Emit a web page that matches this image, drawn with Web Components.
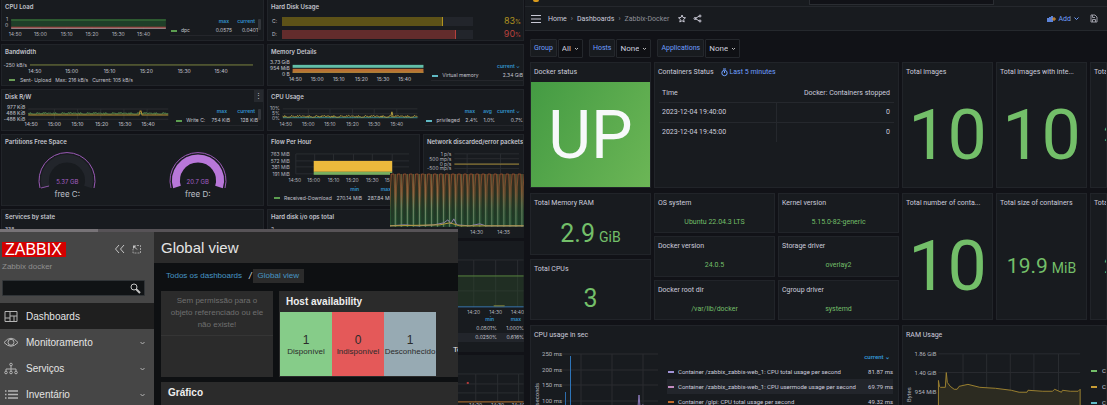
<!DOCTYPE html>
<html lang="en">
<head>
<meta charset="utf-8">
<title>Monitoring dashboards</title>
<style>
html,body{margin:0;height:100%;background:#111217}
body{overflow:hidden;font-family:Inter,sans-serif;color:#c3c4cd}
</style>
</head>
<body>
<monitor-wall></monitor-wall>
<script>
const BASE = `<style>*{box-sizing:border-box}h1,h2,p,ul{margin:0;padding:0;font-weight:inherit;font-size:inherit}button,input{font:inherit;color:inherit;background:none;border:0;padding:0;margin:0}a{color:inherit;text-decoration:none}svg{display:block}</style>`;
function define(name, html, setup) {
  customElements.define(name, class extends HTMLElement {
    constructor() { super(); this.attachShadow({mode: 'open'}); }
    connectedCallback() {
      if (this.shadowRoot.childNodes.length) return;
      this.shadowRoot.innerHTML = BASE + (typeof html === 'function' ? html(this) : html);
      if (setup) setup(this.shadowRoot, this);
    }
  });
}

/* ---------- charts ---------- */
const times = ['14:50','15:00','15:10','15:20','15:30','15:40'];
const spread = (from, step, labels = times) => labels.map((t, i) => [Math.round(from + step * i), t]);
const line = (pts, c, w = 1, fill = 'none') => `<polyline points="${pts}" fill="${fill}" stroke="${c}" stroke-width="${w}"/>`;
const rect = (x, y, w, h, c) => `<rect x="${x}" y="${y}" width="${w}" height="${h}" fill="${c}"/>`;
function noise(x0, x1, y, amp, step = 1) {
  let s = '', r = 7;
  for (let x = x0; x <= x1; x += step) { r = (r * 37 + 11) % 101; s += `${x},${(y - amp * r / 101).toFixed(1)} `; }
  return s;
}
function spikes() {
  let s = `<defs><linearGradient id="g" x1="0" y1="0" x2="0" y2="1"><stop offset="0" stop-color="#35291f"/><stop offset=".45" stop-color="#263322"/><stop offset="1" stop-color="#1d3d28"/></linearGradient><linearGradient id="o" x1="0" y1="0" x2="0" y2="1"><stop offset="0" stop-color="#a8562e"/><stop offset=".4" stop-color="#8a5a32"/><stop offset=".7" stop-color="#2f5a38"/></linearGradient><linearGradient id="p" x1="0" y1="0" x2="0" y2="1"><stop offset="0" stop-color="#55603c"/><stop offset=".3" stop-color="#94623c"/><stop offset=".6" stop-color="#6f8562"/><stop offset="1" stop-color="#5d8060"/></linearGradient></defs>` + rect(0, 1, 134, 53, 'url(#g)');
  for (let i = 0; i < 23; i++) {
    const x = i * 6.05;
    s += `<path d="M${x + .5} 54 V14 L${x + 1.4} 1 H${x + 4} L${x + 4.6} 16 V54" fill="none" stroke="url(#o)" stroke-width=".7"/>` +
         rect((x + 4.8).toFixed(1), 1, 1.1, 53, 'url(#p)');
  }
  return s + line('0,53 14,52 28,53 44,52 54,50 58,47 61,51 64,46 67,52 80,53 90,51 96,53 134,53', '#8d80a8') + line('0,53 50,52 60,50 70,53 134,53', '#b59a3c');
}
const CHARTS = {
  cpuload: {w:166,h:29,box:[9,8,153,10],grid:[38,64,89,115,140],rows:[12],xt:spread(13,25.4),xy:25,yt:[[10,'1'],[16,'0']],yr:6,
    draw:rect(9,8,153,8,'#1f3f29')+line('9,9 162,9','#3f7d3c')+line('9,16 162,16','#b23a3a')+line('9,17 162,17','#b9a0a0')},
  bandwidth: {w:262,h:18,box:[28,7,224,4],grid:[],rows:[],xt:spread(33,37.4),xy:17,yt:[[11,'-250 kB/s']],yr:25,bold:1,
    draw:line('28,9 252,9','#7d8640')},
  disk: {w:172,h:29,box:[26,8,139,10],grid:[52,75,98,121,144],rows:[8,13,18],xt:spread(29,23.2),xy:25,yt:[[8,'977 KiB'],[14,'488 KiB'],[20,'-488 KiB']],yr:23,bold:1,
    draw:line(noise(26,165,13,1.6),'#4e7a45')+line('26,14 136,14 137,10 138,10 139,14 165,14','#b89335')},
  memory: {w:166,h:30,box:[25,8,133,10],grid:[],rows:[],xt:spread(28,22.2),xy:25,yt:[[8,'3.73 GiB'],[14,'954 MiB'],[20,'0 B']],yr:22,bold:1,
    draw:rect(25,9,133,3,'#62bfa8')+rect(25,13,133,4,'#b97034')+rect(25,16,133,1,'#b58d3a')},
  cpuusage: {w:160,h:30,box:[15,8,137,10],grid:[41,63,86,108,131],rows:[8,13],xt:spread(18,22.6),xy:25,yt:[[9,'10%'],[14,'5%'],[19,'0%']],yr:12,
    draw:line('15,17 152,17','#3c8c8c')+line(noise(15,152,16.6,2.2),'#a8963d')+line('125,15 126,11 127,15','#b5a03f')},
  flow: {w:152,h:38,box:[28,8,114,20],grid:[28,47,66,86,105,125],rows:[8,15,21,28],xt:spread(27,19.4),xy:36,yt:[[10,'763 MiB'],[17,'572 MiB'],[23,'381 MiB'],[30,'191 MiB']],yr:22,
    draw:rect(46,15,79,11,'#ecb93c')+rect(46,26,79,3,'#77ae5e')},
  network: {w:101,h:38,box:[31,8,66,20],grid:[44,78],rows:[8,13,18,23],xt:[],xy:36,yt:[[10,'1 p/s'],[15,'500 mp/s'],[20,'0 p/s'],[25,'-500 mp/s']],yr:28,
    draw:line('31,18.5 97,18.5','#a58d38')},
  stripes: {w:134,h:64,box:[0,0,134,54],grid:[],rows:[],xt:[[87,'14:30'],[114,'14:35']],xy:61,yt:[],yr:0,draw:spikes()},
  idle: {w:134,h:58,box:[60,3,74,47],grid:[84,106,128],rows:[3,34],xt:[[84,'14:20'],[106,'14:30'],[128,'14:40']],xy:57,yt:[],yr:0,
    draw:`<rect x="60" y="19" width="74" height="31" fill="#2c4a2a" opacity=".4"/>`+line('60,19 134,19','#58853f')+line('60,50 134,50','#3874b0')+line('104,49 115,49','#8a8a3c')},
  swap: {w:134,h:40,box:[60,4,74,28],grid:[86,108,129],rows:[4,14,23],xt:[[86,'14:20'],[108,'14:30'],[129,'14:40']],xy:37,yt:[],yr:0,
    draw:line('60,32 134,32','#b9742f')+rect(77,12,2,2,'#b23a3a')},
  cpusec: {w:136,h:80,box:[31,9,96,70],grid:[50,81,112],rows:[9,25,40,56,71],xt:[],xy:0,yt:[[11,'250 ms'],[27,'200 ms'],[42,'150 ms'],[58,'100 ms']],yr:31,fs:6,side:['seconds',8,38],
    draw:rect(34,47,1,33,'#2d6cab')+rect(39,11,1,69,'#2d74b8')+line('104,80 107,62 108,50 109,62 111,60 116,61 128,62','#8a78b8')},
  ram: {w:184,h:80,box:[36,9,144,70],grid:[61,85,109,133,158],rows:[9,28,48],xt:[],xy:0,yt:[[11,'1.86 GiB'],[30,'1.40 GiB'],[50,'954 MiB']],yr:34,fs:6,side:['Bytes',8,43],
    draw:`<path d="M36 80V36L37 42 38 43H43L44 28 45 38 48 42 52 45H55L57 42 66 40 78 43 94 44 110 46 118 48H126L127 46 142 47H152L154 45 161 48 162 46 170 47 178 47 180 45V80Z" fill="#2c2b21" stroke="#9b8130" stroke-width="1"/>`}
};
define('time-chart', el => {
  const c = CHARTS[el.getAttribute('data')], [x, y, w, h] = c.box, g = 'stroke="#2a2d31" stroke-width="1"';
  return `<style>:host{display:block;min-width:0}svg{width:100%;overflow:visible}text{font-family:var(--chart-font,Inter);font-size:${c.fs || 5}px;fill:#b4b5be;font-weight:${c.bold ? 500 : 400}}</style>
  <svg viewBox="0 0 ${c.w} ${c.h}" role="img" aria-label="Time series">
  ${c.rows.map(v => `<path d="M${x} ${v}H${x + w}" ${g}/>`).join('')}${c.grid.map(v => `<path d="M${v} ${y}V${y + h}" ${g}/>`).join('')}
  ${c.draw}
  ${c.xt.map(([v, t]) => `<text x="${v}" y="${c.xy}" text-anchor="middle">${t}</text>`).join('')}
  ${c.yt.map(([v, t]) => `<text x="${c.yr}" y="${v}" text-anchor="end">${t}</text>`).join('')}
  ${c.side ? `<text transform="translate(${c.side[1]} ${c.side[2]}) rotate(-90)" text-anchor="end">${c.side[0]}</text>` : ''}
  </svg>`;
});

/* rows: "colour|name|value|value; ..."   cols: "label:width, ..." */
define('series-legend', el => {
  const cols = (el.getAttribute('cols')).split(',').map(s => s.split(':'));
  const rows = el.getAttribute('rows').split(';').map(s => s.split('|'));
  return `<style>:host{display:block;font-size:var(--fs,5px);line-height:var(--row,9px);min-width:0}
  table{width:100%;border-collapse:collapse;table-layout:fixed}th,td{padding:0;font-weight:400;text-align:right;white-space:nowrap}
  thead th{color:#3394cf;font-weight:600;padding-right:3px}tbody th{text-align:left}
  tbody tr:nth-child(2){background:#22252b}i{display:inline-block;width:6px;height:2px;margin:0 4px 0 1px;vertical-align:middle}
  :host([underline]) tbody tr{border-bottom:1px solid #24262b}</style>
  <table><colgroup><col>${cols.map(c => `<col style="width:${c[1]}px">`).join('')}</colgroup>
  <thead><tr><td></td>${cols.map(c => `<th scope="col">${c[0]}</th>`).join('')}</tr></thead>
  <tbody>${rows.map(([c, n, ...v]) => `<tr><th scope="row"><i style="background:${c}"></i>${n}</th>${v.map(t => `<td>${t}</td>`).join('')}</tr>`).join('')}</tbody></table>`;
});

define('dash-panel', el => `<style>
  :host{display:flex;flex-direction:column;min-width:0;min-height:0;background:#181b1f;border:1px solid #212429;overflow:hidden;position:relative}
  h2{flex:none;display:flex;font-size:var(--title-size,6px);font-weight:var(--title-weight,600);line-height:var(--title-line,9px);padding:var(--title-pad,2px 3px 0);white-space:nowrap;overflow:hidden}
  .body{flex:1;min-height:0;min-width:0;display:flex;flex-direction:column}</style>
  <h2>${el.getAttribute('heading')}<slot name="extra"></slot></h2><div class="body"><slot></slot></div>`);

define('usage-bar', el => `<style>:host{display:grid;grid-template-columns:10px 192fr 48fr;align-items:center;height:9px;font-size:5px;padding:0 2px 0 4px}
  .track{height:9px;background:#22252b}.fill{height:100%;width:${el.getAttribute('fill')}%;background:${el.getAttribute('tone')};border-right:1px solid ${el.getAttribute('edge')}}
  b{font-size:9px;font-weight:400;line-height:9px;text-align:right;color:${el.getAttribute('edge')}}small{font-size:6px}</style>
  <span>${el.getAttribute('label')}</span><div class="track" role="meter" aria-label="Disk ${el.getAttribute('label')}" aria-valuenow="${el.getAttribute('value')}"><div class="fill"></div></div><b>${el.getAttribute('value')}<small>%</small></b>`);

define('arc-gauge', el => {
  const full = el.hasAttribute('full');
  return `<style>:host{display:flex;flex-direction:column;align-items:center;width:64px;line-height:8px}svg{width:64px;height:44px;margin-bottom:-13px}
  b{font-weight:400;font-size:6px;color:#a45fc4;line-height:9px}span{font-size:8px;line-height:16px;color:#bfc0c9}</style>
  <svg viewBox="0 0 64 44" aria-hidden="true"><g fill="none" transform="translate(32 35)"><path d="M-27 7A28 28 0 1 1 27 7" stroke="#9a5ab5" stroke-width="1"/>
  <path d="M-21 6A22 22 0 1 1 21 6" stroke="${full ? '#b877d9' : '#22252b'}" stroke-width="8"/>${full ? '' : '<path d="M-26 7L-18 5" stroke="#8b55a5" stroke-width="1"/>'}</g></svg>
  <b>${el.getAttribute('value')}</b><span>${el.getAttribute('label')}</span>`;
});

/* ---------- host dashboard ---------- */
define('host-dashboard', `<style>
  :host{display:grid;grid-template-columns:263fr 257fr;gap:3px;padding-left:1px;margin-top:-1px;grid-template-rows:42px 42px 42px 72px 60px;align-items:stretch}
  .side{display:grid;align-items:start}.a{grid-template-columns:166fr 87fr 5px}.b{grid-template-columns:172fr 82fr 5px}.c{grid-template-columns:164fr 92fr}.d{grid-template-columns:158fr 98fr}
  .split{display:grid;grid-template-columns:153fr 101fr;gap:3px;min-width:0}
  .side series-legend{margin-top:6px}.thumb{width:3px;height:11px;margin-top:8px;background:#33363b;border-radius:1px}
  .key{display:flex;gap:4px;font-size:5px;line-height:9px;padding:2px 7px 0;align-items:center}.key i{width:6px;height:2px;background:#6b9e57;margin-right:1px}
  .bars{display:grid;gap:4px;padding-top:5px}.gauges{display:flex;justify-content:space-around}
  .menu{position:absolute;right:0;top:0;width:9px;height:12px;background:#26292e;font-size:7px;line-height:10px}
  .num{font-size:5px;line-height:8px;padding:4px 3px}.flow{padding:1px 25px 0 5px}
  </style>
  <dash-panel heading="CPU Load"><div class="side a"><time-chart data="cpuload"></time-chart><series-legend underline cols="max:29,current:26" rows="#5c9e50|dpc|0.0575|0.0401"></series-legend><span class="thumb"></span></div></dash-panel>
  <dash-panel heading="Hard Disk Usage"><div class="bars"><usage-bar label="C:" value="83" fill="84" tone="#5d5218" edge="#b0921f"></usage-bar><usage-bar label="D:" value="90" fill="91" tone="#632c2c" edge="#b5403c"></usage-bar></div></dash-panel>
  <dash-panel heading="Bandwidth"><time-chart data="bandwidth"></time-chart><div class="key"><i></i><span>Sent- Upload</span><span>Max: 216 kB/s</span><span>Current: 105 kB/s</span></div></dash-panel>
  <dash-panel heading="Memory Details"><div class="side c"><time-chart data="memory"></time-chart><series-legend underline cols="current ⌄:30" rows="#5fb9c4|Virtual memory|2.34 GiB"></series-legend></div></dash-panel>
  <dash-panel heading="Disk R/W"><div class="side b"><time-chart data="disk"></time-chart><series-legend underline cols="max:24,current:28" rows="#5c9e50|Write C:|754 KiB|128 KiB"></series-legend><span class="thumb"></span></div><button class="menu" aria-label="Panel menu">⋮</button></dash-panel>
  <dash-panel heading="CPU Usage"><div class="side d"><time-chart data="cpuusage"></time-chart><series-legend underline cols="max:17,avg:17,current ⌄:28" rows="#5fb9c4|privileged|2.4%|1.0%|0.7%"></series-legend></div></dash-panel>
  <dash-panel heading="Partitions Free Space"><div class="gauges"><arc-gauge value="5.37 GB" label="free C:"></arc-gauge><arc-gauge full value="20.7 GB" label="free D:"></arc-gauge></div></dash-panel>
  <div class="split"><dash-panel heading="Flow Per Hour"><time-chart data="flow"></time-chart><series-legend class="flow" cols="min:31,max:32" rows="#5c9e50|Received-Download|270.14 MiB|287.84 MiB"></series-legend></dash-panel>
  <dash-panel heading="Network discarded/error packets"><time-chart data="network"></time-chart></dash-panel></div>
  <dash-panel heading="Services by state"><div class="num">338</div></dash-panel>
  <dash-panel heading="Hard disk i/o ops total"><div class="num">2</div></dash-panel>`);

define('trend-dashboard', `<style>:host{display:flex;flex-direction:column;gap:3px;background:#111217;overflow:hidden}
  section{background:#181b1f;flex:none}.t{padding-bottom:1px}.m{height:111px;padding-top:16px}.l{height:60px;padding-top:15px}series-legend{padding-left:48%}</style>
  <section class="t"><time-chart data="stripes"></time-chart></section>
  <section class="m"><time-chart data="idle"></time-chart><series-legend cols="min:24,max:27" rows="transparent||0.0501%|1.000%;transparent||0.0250%|0.616%"></series-legend></section>
  <section class="l"><time-chart data="swap"></time-chart></section>`);

/* ---------- Zabbix window ---------- */
const I = {
  dash:'<path d="M1 1.5H13V11.5H1ZM6 1.5V11.5M6 6H13M10 6V11.5M1 8H6"/>',
  eye:'<path d="M0 6.500Q7-2 14 6.500Q7 14 0 6.500Z"/><circle cx="7" cy="6.300" r="3"/>',
  tree:'<path d="M7 4V7M2 9V7H12V9M7 7V9"/><circle cx="7" cy="2.500" r="1.300"/><circle cx="2" cy="10.500" r="1.300"/><circle cx="7" cy="10.500" r="1.300"/><circle cx="12" cy="10.500" r="1.300"/>',
  list:'<path d="M1 3H2.500M4 3H14M1 6.500H2.500M4 6.500H14M1 10H2.500M4 10H14" stroke-width="1.600"/>'
};
define('side-item', el => `<style>:host{display:block;height:26px}a{display:flex;align-items:center;height:26px;padding:0 8px 0 4px;font-size:10px;color:#e4e4e4}
  :host([active]) a{background:#1f1f1f}.i{width:14px;height:13px;margin-right:8px}svg{fill:none;stroke:#b4b4b4}span{flex:1}.c{width:7px;height:7px}</style>
  <a href="#"><svg class="i" viewBox="0 0 14 13">${I[el.getAttribute('icon')]}</svg><span><slot></slot></span>${el.hasAttribute('active') ? '' : '<svg class="c" viewBox="0 0 7 7"><path d="M1.500 3L3.500 5L5.500 3"/></svg>'}</a>`);
define('zabbix-window', `<style>
  :host{display:grid;grid-template-columns:154px 1fr;grid-template-rows:auto 1fr;background:#0e1012;font-family:"Liberation Sans",Arial,sans-serif;color:#e4e4e4;overflow:hidden}
  .edge{grid-column:1/3;height:3px;background:linear-gradient(90deg,#777377 98px,#575357 98px)}
  nav{background:#464646}.brand{display:flex;align-items:center;height:30px;padding:4px 13px 0 2px}
  .logo{background:#d40000;color:#fff;font-size:16px;line-height:15px;padding:0 4px 0 3px;height:15px;margin-right:auto}
  .brand button{display:flex;margin-left:7px}.brand svg{stroke:#c4c4c4;fill:none}
  p.sub{font-size:8px;line-height:9px;padding-left:2px;color:#8f8f8f}
  label{display:flex;align-items:center;height:16px;margin:9px 9px 7px 2px;background:#101315;border:1px solid #303437;border-radius:1px;padding-right:3px}input{flex:1;min-width:0;outline:0}
  header{background:#2b2b2b;height:31px;font-size:15px;line-height:32px;padding-left:7px}
  .crumb{display:flex;align-items:center;font-size:8px;padding:5px 0 7px 12px;height:28px;color:#4796c4}.crumb i{color:#ddd;margin:0 1px 0 7px;font-size:9px}.crumb a{line-height:14px}.cur{background:#2b2b2b;padding:0 5px}
  .row{display:grid;grid-template-columns:112px 1fr;gap:6px;height:86px;margin-left:7px}.card{background:#2b2b2b;overflow:hidden}
  .msg{font-size:8px;line-height:12px;color:#6f6f6f;text-align:center;padding-top:4px}.msg p{border-bottom:1px solid #353535;height:41px;padding:0 4px}
  h2{font-size:10px;font-weight:700;line-height:21px;padding-left:7px;color:#eee}
  .tiles{display:grid;grid-template-columns:repeat(3,52px) 1fr;padding-left:1px;height:64px;font-size:8px;text-align:center;color:#2b2b2b}
  .tiles div{display:flex;flex-direction:column;align-items:center;justify-content:center;line-height:10px;padding-top:1px;white-space:nowrap}.tiles b{font-size:12px;font-weight:400;line-height:14px}
  .tot{color:#eee;padding:33px 0 0 17px;text-align:left;overflow:hidden;white-space:nowrap}
  .graf{margin:5px 0 0 7px;height:60px}
  </style>
  <div class="edge"></div>
  <nav><div class="brand"><span class="logo">ZABBIX</span><button aria-label="Collapse"><svg width="11" height="10"><path d="M5 1L1.500 5L5 9M10 1L6.500 5L10 9"/></svg></button><button aria-label="Compact"><svg width="9" height="10"><path d="M5 1.500H8.500V9H1V5" stroke-dasharray="2 1" opacity=".7"/><path d="M1 1.500H4.500L1 5Z" fill="#c4c4c4" stroke="none"/><path d="M2 2.500L5 5.500"/></svg></button></div>
  <p class="sub">Zabbix docker</p>
  <label><input type="text" aria-label="Search"><svg width="12" height="12" fill="none" stroke="#c4c4c4"><circle cx="5" cy="5" r="3"/><path d="M7 7L11 11" stroke-width="2"/></svg></label>
  <side-item active icon="dash">Dashboards</side-item><side-item icon="eye">Monitoramento</side-item><side-item icon="tree">Serviços</side-item><side-item icon="list">Inventário</side-item></nav>
  <main><header><h1>Global view</h1></header>
  <div class="crumb"><a href="#">Todos os dashboards</a><i>/</i><a class="cur" href="#">Global view</a></div>
  <div class="row"><div class="card msg"><p>Sem permissão para o objeto referenciado ou ele não existe!</p></div>
  <div class="card"><h2>Host availability</h2><div class="tiles"><div style="background:#86cc89"><b>1</b>Disponível</div><div style="background:#e45959"><b>0</b>Indisponível</div><div style="background:#97aab3"><b>1</b>Desconhecido</div><span class="tot">Total</span></div></div></div>
  <div class="card graf"><h2>Gráfico</h2></div></main>`);

/* ---------- Docker dashboard ---------- */
define('stat-value', el => `<style>:host{flex:1;display:flex;align-items:center;justify-content:center;color:#73bf69;font-size:var(--s,7px);line-height:1;white-space:nowrap}
  span{display:flex;align-items:baseline;gap:4px}small{font-size:var(--u,14px)}</style><span><slot></slot>${el.hasAttribute('unit') ? `<small>${el.getAttribute('unit')}</small>` : ''}</span>`);
define('filter-pick', el => `<style>:host{display:flex;gap:1px;height:20px;font-size:7px}label,div{border:1px solid #24272c;border-radius:1px;display:flex;align-items:center;padding:0 3px}
  label{background:#181b1f;color:#6e9fff;height:18px}div{background:#0f1014;gap:3px;height:19px}select{appearance:none;font:inherit;font-size:8px;color:#ccccdc;background:none;border:0;padding:0;margin:0;field-sizing:content}svg{fill:none;stroke:#bbb}</style>
  <label for="s">${el.getAttribute('label')}</label><div><select id="s"><option>${el.getAttribute('value')}</option></select><svg width="5" height="5"><path d="M1 2L2.500 3.500L4 2"/></svg></div>`);
define('docker-dashboard', `<style>
  :host{display:block;min-width:0;background:#111217;font-family:Roboto,sans-serif;font-size:7px;color:#ccccdc;overflow:hidden;--chart-font:Roboto;--title-size:7px;--title-weight:400;--title-line:19px;--title-pad:0 3px}
  .top{height:7px;margin-left:1px;background:#181b1f;border-bottom:1px solid #25282d;display:flex;padding-left:8px}.flame{width:6px;height:2px;background:#d99a1c;border-radius:0 0 2px 2px}.search{margin-left:47%;width:185px;height:5px;background:#111217;border:1px solid #2a2d32;border-top:0}
  header{display:flex;align-items:center;height:24px;margin-left:1px;background:#181b1f;border-bottom:1px solid #25282d;padding:0 9px 0 6px}
  header svg{fill:none;stroke:#c8c8d4}.crumb{display:flex;align-items:center;gap:4px;margin:0 9px 0 7px}.crumb span{color:#8e8f99}.share{margin-left:7px}
  .add{margin-left:auto;color:#6e9fff;display:flex;align-items:center;gap:3px}.save{margin-left:11px}
  .filters{display:flex;padding:8px 0 3px 6px;gap:6px}
  .grid{display:grid;grid-template-columns:121fr 121fr 121fr 91fr 91fr 17fr;gap:5px 3px;padding-left:6px;grid-template-rows:126px 127px 81px}
  .two{grid-column:span 2}.three{grid-column:span 3}
  .stack{display:grid;gap:4px;min-width:0}.info{grid-template-columns:1fr 1fr;gap:3px}
  .up{flex:1;display:flex;align-items:center;justify-content:center;font-size:66px;color:#f7f9fa;background:linear-gradient(120deg,#449b43,#6cb656);line-height:1;padding-top:3px;font-weight:400}
  .big{--s:70px}.mid{--s:25px}.small{--s:21px;--u:14px}.edge{justify-content:start;padding-left:13px}
  .last{color:#6e9fff;display:flex;align-items:center;gap:2px;margin-left:7px}.last svg{fill:none;stroke:#6e9fff}
  table{width:auto;margin:2px 4px 0;border-collapse:collapse;font-size:7px}th,td{font-weight:400;text-align:left;padding:0 3px;height:20px;border-bottom:1px solid #25282d}th{height:18px}tr>:last-child{text-align:right;padding-right:4px}td:first-child{border-right:1px solid #25282d;width:50%}tbody tr:last-child td{border-bottom:0}
  .chart{display:grid;align-items:start}.cs{grid-template-columns:136fr 226fr 5px}.rm{grid-template-columns:184fr 20fr}
  series-legend{--fs:6px;--row:15px;padding-top:4px}
  .keys{display:grid;gap:15px;padding:25px 0 0 7px;white-space:nowrap;font-size:6px}.keys span{display:flex;align-items:center;height:1px;gap:5px}.keys i{width:6px;height:2px;flex:none}
  </style>
  <div class="top"><span class="flame"></span><span class="search"></span></div>
  <header><button aria-label="Menu"><svg width="10" height="10"><path d="M0 1.500H10M0 5H10M0 8.500H10"/></svg></button>
  <nav class="crumb"><a href="#">Home</a><span>›</span><a href="#">Dashboards</a><span>›</span><span>Zabbix-Docker</span></nav>
  <button aria-label="Star"><svg width="8" height="9"><path d="M4 1L5 3.500L7.500 3.800L5.600 5.500L6.200 8L4 6.700L1.800 8L2.400 5.500L.5 3.800L3 3.500Z"/></svg></button>
  <button aria-label="Share" class="share"><svg width="9" height="9"><path d="M6.500 2L2 4.500L6.500 7"/><circle cx="7" cy="2" r="1"/><circle cx="2" cy="4.500" r="1"/><circle cx="7" cy="7" r="1"/></svg></button>
  <button class="add"><svg width="9" height="8"><path d="M0 3H2V2H4V1H6V7H0Z" fill="#5c83d8" stroke="none"/><path d="M5 4H9M7 2V6" stroke="#e59a3c"/></svg>Add<svg width="5" height="5" style="stroke:#6e9fff"><path d="M.5 1.500L2.500 3.500L4.500 1.500"/></svg></button>
  <button class="save" aria-label="Save"><svg width="8" height="9" style="stroke:#9a9ba5"><path d="M1 1H5L7 3V8H1ZM2.500 1V3.500H5M2.500 8V5.500H5.500V8"/></svg></button></header>
  <div class="filters"><filter-pick label="Group" value="All"></filter-pick><filter-pick label="Hosts" value="None"></filter-pick><filter-pick label="Applications" value="None"></filter-pick></div>
  <div class="grid">
   <dash-panel heading="Docker status"><div class="up">UP</div></dash-panel>
   <dash-panel class="two" heading="Containers Status"><span slot="extra" class="last"><svg width="7" height="9"><circle cx="3.500" cy="5" r="2.700"/><path d="M3.500 3V5M2 1H5"/></svg>Last 5 minutes</span>
    <table><thead><tr><th scope="col">Time</th><th scope="col">Docker: Containers stopped</th></tr></thead><tbody><tr><td>2023-12-04 19:40:00</td><td>0</td></tr><tr><td>2023-12-04 19:45:00</td><td>0</td></tr></tbody></table></dash-panel>
   <dash-panel heading="Total images"><stat-value class="big">10</stat-value></dash-panel>
   <dash-panel heading="Total images with inte..."><stat-value class="big">10</stat-value></dash-panel>
   <dash-panel heading="Total"><stat-value class="small edge">2</stat-value></dash-panel>
   <div class="stack"><dash-panel heading="Total Memory RAM"><stat-value class="mid" unit="GiB">2.9</stat-value></dash-panel><dash-panel heading="Total CPUs"><stat-value class="mid">3</stat-value></dash-panel></div>
   <div class="stack info two"><dash-panel heading="OS system"><stat-value>Ubuntu 22.04.3 LTS</stat-value></dash-panel><dash-panel heading="Kernel version"><stat-value>5.15.0-82-generic</stat-value></dash-panel>
    <dash-panel heading="Docker version"><stat-value>24.0.5</stat-value></dash-panel><dash-panel heading="Storage driver"><stat-value>overlay2</stat-value></dash-panel>
    <dash-panel heading="Docker root dir"><stat-value>/var/lib/docker</stat-value></dash-panel><dash-panel heading="Cgroup driver"><stat-value>systemd</stat-value></dash-panel></div>
   <dash-panel heading="Total number of conta..."><stat-value class="big">10</stat-value></dash-panel>
   <dash-panel heading="Total size of containers"><stat-value class="small" unit="MiB">19.9</stat-value></dash-panel>
   <dash-panel heading="Total"><stat-value class="small edge">2</stat-value></dash-panel>
   <dash-panel class="three" heading="CPU usage in sec"><div class="chart cs"><time-chart data="cpusec"></time-chart><series-legend cols="current ⌄:34" rows="#a294d8|Container /zabbix_zabbix-web_1: CPU total usage per second|81.87 ms;#c38bc0|Container /zabbix_zabbix-web_1: CPU usermode usage per second|69.79 ms;#c26a2b|Container /glpi: CPU total usage per second|49.32 ms"></series-legend></div></dash-panel>
   <dash-panel class="three" heading="RAM Usage"><div class="chart rm"><time-chart data="ram"></time-chart><div class="keys"><span><i style="background:#73bf69"></i>C</span><span><i style="background:#c79c35"></i>C</span><span><i style="background:#5fb9c4"></i>C</span></div></div></dash-panel>
  </div>`);

define('monitor-wall', `<style>:host{display:grid;grid-template-columns:524fr 583fr;height:100vh;overflow:hidden}
  .left{position:relative;overflow:hidden;min-width:0}trend-dashboard{position:absolute;left:74.5%;right:0;top:173px;bottom:0}
  zabbix-window{position:absolute;left:0;top:229px;bottom:0;width:87.4%}</style>
  <div class="left"><host-dashboard></host-dashboard><trend-dashboard></trend-dashboard><zabbix-window></zabbix-window></div>
  <docker-dashboard></docker-dashboard>`);
</script>
</body>
</html>
